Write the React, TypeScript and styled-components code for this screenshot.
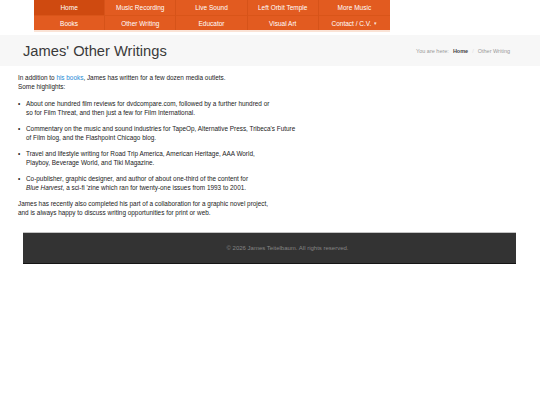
import React from "react";
import styled, { createGlobalStyle } from "styled-components";

const Global = createGlobalStyle`
  html, body { margin: 0; padding: 0; background: #fff; }
  body { font-family: "Liberation Sans", Arial, sans-serif; }
`;

const Page = styled.div`
  width: 540px;
  min-height: 405px;
  background: #fff;
`;

const NavWrap = styled.nav`
  margin-left: 34px;
  width: 356px;
  border-bottom: 2px solid #fae3d6;
`;

const NavGrid = styled.div`
  display: grid;
  grid-template-columns: repeat(5, 1fr);
  background: #e25b20;
`;

const NavItem = styled.a<{ $active?: boolean; $row: number }>`
  display: flex;
  align-items: center;
  justify-content: center;
  height: ${(p) => (p.$row === 0 ? 15 : 14)}px;
  background: ${(p) => (p.$active ? "#cf4a10" : "#e25b20")};
  border-right: 1px solid #d65319;
  border-top: ${(p) => (p.$row === 1 ? "1px solid #d95519" : "none")};
  color: #fff;
  font-size: 6.5px;
  text-decoration: none;
  &:nth-child(5n) { border-right: none; }
`;

const Caret = styled.span`
  font-size: 5px;
  margin-left: 3px;
  opacity: 0.85;
`;

const HeaderBand = styled.header`
  margin-top: 3px;
  height: 31px;
  background: #f7f7f7;
  display: flex;
  align-items: center;
  justify-content: space-between;
  padding: 0 30px 0 23px;
`;

const Title = styled.h1`
  margin: 0;
  font-size: 14.7px;
  font-weight: normal;
  color: #3a3a3a;
`;

const Crumbs = styled.div`
  font-size: 5.5px;
  color: #999;
  display: flex;
  gap: 4px;
  align-items: center;
`;

const CrumbHome = styled.span`
  color: #444;
  font-weight: bold;
`;

const CrumbSep = styled.span`
  color: #ddd;
`;

const Content = styled.main`
  padding: 7px 18px 0 18px;
  font-size: 6.4px;
  line-height: 9px;
  color: #222;
`;

const Para = styled.p`
  margin: 0 0 8px 0;
`;

const Link = styled.a`
  color: #1d8ad6;
  text-decoration: none;
`;

const List = styled.ul`
  list-style: none;
  margin: 0;
  padding: 0;
`;

const Item = styled.li`
  display: flex;
  margin: 0 0 7px 0;
`;

const Bullet = styled.span`
  width: 8px;
  flex: none;
`;

const Footer = styled.footer`
  margin: 15px 24px 0 23px;
  padding-left: 36px;
  height: 30px;
  background: #333;
  border-top: 1px solid #c4c4c4;
  border-bottom: 1px solid #151515;
  display: flex;
  align-items: center;
  justify-content: center;
  color: #858585;
  font-size: 6px;
`;

const rows = [
  ["Home", "Music Recording", "Live Sound", "Left Orbit Temple", "More Music"],
  ["Books", "Other Writing", "Educator", "Visual Art", "Contact / C.V."],
];

export default function App() {
  return (
    <Page>
      <Global />
      <NavWrap>
        <NavGrid>
          {rows.map((r, ri) =>
            r.map((label, ci) => (
              <NavItem key={label} $row={ri} $active={ri === 0 && ci === 0} href="#">
                {label}
                {ri === 1 && ci === 4 && <Caret>▾</Caret>}
              </NavItem>
            ))
          )}
        </NavGrid>
      </NavWrap>
      <HeaderBand>
        <Title>James' Other Writings</Title>
        <Crumbs>
          <span>You are here:</span>
          <CrumbHome>Home</CrumbHome>
          <CrumbSep>/</CrumbSep>
          <span>Other Writing</span>
        </Crumbs>
      </HeaderBand>
      <Content>
        <Para>
          In addition to <Link href="#">his books</Link>, James has written for a few dozen media outlets.
          <br />
          Some highlights:
        </Para>
        <List>
          <Item>
            <Bullet>•</Bullet>
            <span>
              About one hundred film reviews for dvdcompare.com, followed by a further hundred or
              <br />
              so for Film Threat, and then just a few for Film International.
            </span>
          </Item>
          <Item>
            <Bullet>•</Bullet>
            <span>
              Commentary on the music and sound industries for TapeOp, Alternative Press, Tribeca's Future
              <br />
              of Film blog, and the Flashpoint Chicago blog.
            </span>
          </Item>
          <Item>
            <Bullet>•</Bullet>
            <span>
              Travel and lifestyle writing for Road Trip America, American Heritage, AAA World,
              <br />
              Playboy, Beverage World, and Tiki Magazine.
            </span>
          </Item>
          <Item>
            <Bullet>•</Bullet>
            <span>
              Co-publisher, graphic designer, and author of about one-third of the content for
              <br />
              <em>Blue Harvest</em>, a sci-fi 'zine which ran for twenty-one issues from 1993 to 2001.
            </span>
          </Item>
        </List>
        <Para>
          James has recently also completed his part of a collaboration for a graphic novel project,
          <br />
          and is always happy to discuss writing opportunities for print or web.
        </Para>
      </Content>
      <Footer>© 2026 James Teitelbaum. All rights reserved.</Footer>
    </Page>
  );
}
